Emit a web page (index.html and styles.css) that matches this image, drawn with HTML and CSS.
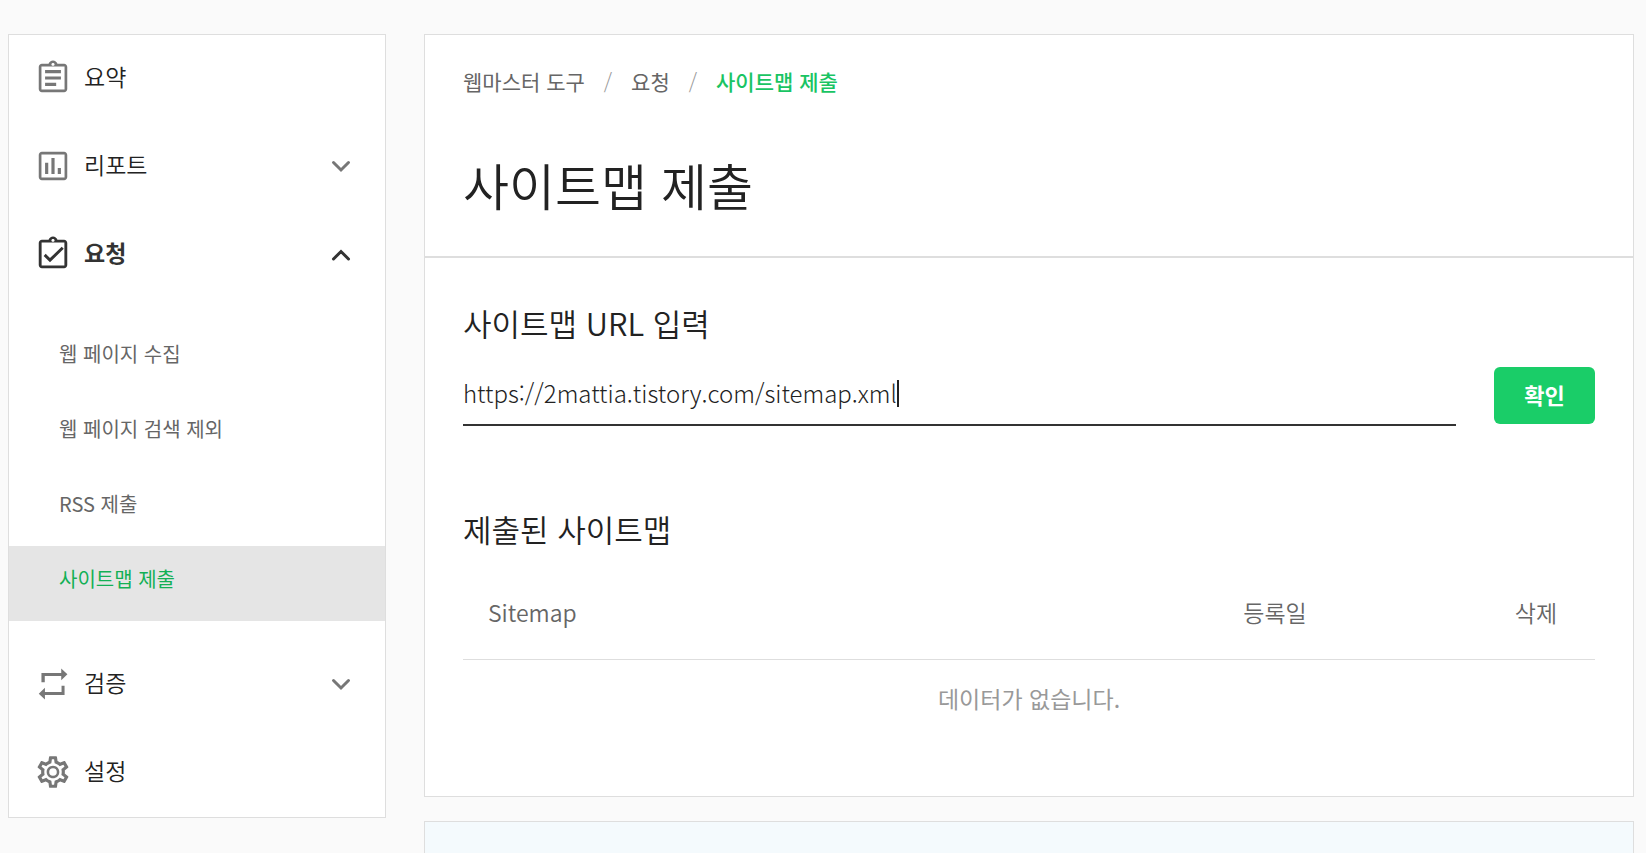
FILE: index.html
```html
<!DOCTYPE html>
<html lang="ko">
<head>
<meta charset="utf-8">
<meta name="viewport" content="width=device-width, initial-scale=1">
<title>사이트맵 제출</title>
<link rel="stylesheet" href="styles.css">
</head>
<body>
<div class="layout">
  <nav class="sidebar">
    <a class="menu-item" href="#">
      <svg class="menu-icon" viewBox="0 0 24 24"><path d="M7 15h7v2H7zm0-4h10v2H7zm0-4h10v2H7zm12-4h-4.180C14.400 1.840 13.300 1 12 1c-1.300 0-2.400.84-2.820 2H5c-1.100 0-2 .9-2 2v14c0 1.100.9 2 2 2h14c1.100 0 2-.9 2-2V5c0-1.100-.9-2-2-2zm-7-.5c.55 0 1 .4 1 .9s-.45.9-1 .9-1-.4-1-.9.450-.9 1-.9zM19.300 19.300H4.700V4.700h14.600z"/></svg>
      <span class="menu-label">요약</span>
    </a>
    <a class="menu-item" href="#">
      <svg class="menu-icon" viewBox="0 0 24 24"><path d="M7 10h2v7H7zm4-3h2v10h-2zm4 6.200h2V17h-2zM19 3H5c-1.100 0-2 .9-2 2v14c0 1.100.9 2 2 2h14c1.100 0 2-.9 2-2V5c0-1.100-.9-2-2-2zm.3 16.300H4.700V4.700h14.600z"/></svg>
      <span class="menu-label">리포트</span>
      <svg class="chevron" viewBox="0 0 24 24"><path d="M4.500 8.500 12 16l7.500-7.500"/></svg>
    </a>
    <a class="menu-item is-open" href="#">
      <svg class="menu-icon" viewBox="0 0 24 24"><path d="M19 3h-4.180C14.400 1.840 13.300 1 12 1c-1.300 0-2.400.84-2.820 2H5c-1.100 0-2 .9-2 2v14c0 1.100.9 2 2 2h14c1.100 0 2-.9 2-2V5c0-1.100-.9-2-2-2zm-7-.5c.55 0 1 .4 1 .9s-.45.9-1 .9-1-.4-1-.9.450-.9 1-.9zM19.200 19.200H4.800V4.800h14.400z"/><path d="m18.800 8.700-1.300-1.300-7.400 7.200-2.700-2.700-1.300 1.300 4 4z"/></svg>
      <span class="menu-label">요청</span>
      <svg class="chevron" viewBox="0 0 24 24"><path d="M4.500 17 12 9.500l7.500 7.500"/></svg>
    </a>
    <div class="submenu">
      <a class="submenu-item" href="#">웹 페이지 수집</a>
      <a class="submenu-item" href="#">웹 페이지 검색 제외</a>
      <a class="submenu-item" href="#">RSS 제출</a>
      <a class="submenu-item is-active" href="#">사이트맵 제출</a>
    </div>
    <a class="menu-item" href="#">
      <svg class="menu-icon" viewBox="0 0 24 24"><path d="M4.700 5.100h12.500V2.200l3.900 3.700-3.900 3.800V6.900H6.800v4H4.700zM19.300 18.900H6.900v2.900L3 18.100l3.900-3.800v2.800h10.500v-4h1.900z"/></svg>
      <span class="menu-label">검증</span>
      <svg class="chevron" viewBox="0 0 24 24"><path d="M4.500 8.500 12 16l7.500-7.500"/></svg>
    </a>
    <a class="menu-item" href="#">
      <svg class="menu-icon" viewBox="0 0 24 24"><path d="M19.430 12.980c.04-.32.070-.64.070-.98 0-.34-.03-.66-.07-.98l2.110-1.650c.19-.15.240-.42.120-.64l-2-3.460c-.09-.16-.26-.25-.44-.25-.06 0-.12.010-.17.030l-2.490 1c-.52-.4-1.080-.73-1.690-.98l-.38-2.650C14.460 2.180 14.250 2 14 2h-4c-.25 0-.46.18-.49.42l-.38 2.650c-.61.25-1.170.59-1.690.98l-2.490-1c-.06-.02-.12-.03-.18-.03-.17 0-.34.09-.43.25l-2 3.460c-.13.22-.07.49.12.640l2.110 1.650c-.04.32-.07.650-.07.980 0 .33.030.66.070.98l-2.110 1.650c-.19.15-.24.420-.12.640l2 3.460c.09.16.26.25.44.25.06 0 .12-.01.17-.03l2.490-1c.52.4 1.080.73 1.690.98l.38 2.650c.03.24.24.42.490.42h4c.25 0 .46-.18.490-.42l.38-2.650c.61-.25 1.170-.59 1.690-.98l2.490 1c.06.020.12.030.18.030.17 0 .34-.09.430-.25l2-3.460c.12-.22.070-.49-.12-.64l-2.110-1.650zm-1.980-1.710c.04.31.050.520.050.730 0 .21-.02.430-.05.730l-.14 1.130.89.700 1.080.84-.7 1.210-1.270-.51-1.040-.42-.9.680c-.43.320-.84.560-1.250.730l-1.060.43-.16 1.130-.2 1.350h-1.400l-.19-1.350-.16-1.130-1.060-.43c-.43-.18-.83-.41-1.230-.71l-.91-.7-1.060.43-1.270.51-.7-1.210 1.080-.84.89-.7-.14-1.130c-.03-.31-.05-.54-.05-.74s.02-.43.050-.73l.14-1.130-.89-.7-1.080-.84.7-1.210 1.270.51 1.040.42.9-.68c.43-.32.840-.56 1.250-.73l1.060-.43.160-1.130.2-1.350h1.390l.19 1.350.16 1.130 1.060.43c.43.180.83.410 1.230.710l.91.700 1.060-.43 1.270-.51.700 1.210-1.070.85-.89.700.14 1.130zM12 8c-2.210 0-4 1.790-4 4s1.790 4 4 4 4-1.790 4-4-1.790-4-4-4zm0 6.400a2.400 2.400 0 1 1 0-4.800 2.400 2.400 0 0 1 0 4.800z"/></svg>
      <span class="menu-label">설정</span>
    </a>
  </nav>

  <main class="content">
    <section class="panel">
      <header class="panel-head">
        <nav class="breadcrumb">
          <a class="crumb" href="#">웹마스터 도구</a>
          <span class="crumb-sep">/</span>
          <a class="crumb" href="#">요청</a>
          <span class="crumb-sep">/</span>
          <a class="crumb is-current" href="#">사이트맵 제출</a>
        </nav>
        <h1 class="page-title">사이트맵 제출</h1>
      </header>
      <div class="panel-body">
        <h2 class="section-title"><label for="sitemap-url">사이트맵 URL 입력</label></h2>
        <form class="url-form">
          <div class="url-field">
            <input class="url-input" id="sitemap-url" type="text" value="https://2mattia.tistory.com/sitemap.xml">
            <span class="caret"></span>
          </div>
          <button class="submit" type="button">확인</button>
        </form>
        <h2 class="section-title">제출된 사이트맵</h2>
        <table class="sitemaps">
          <thead>
            <tr><th class="col-name">Sitemap</th><th class="col-date">등록일</th><th class="col-delete">삭제</th></tr>
          </thead>
          <tbody>
            <tr><td class="empty" colspan="3">데이터가 없습니다.</td></tr>
          </tbody>
        </table>
      </div>
    </section>
    <section class="info"></section>
  </main>
</div>
</body>
</html>
```
FILE: styles.css
```css
* {
  box-sizing: border-box;
}

body {
  margin: 0;
  background: #fafafa;
  color: #222;
  font-family: "Noto Sans CJK KR", sans-serif;
}

a {
  color: inherit;
  text-decoration: none;
}

.layout {
  display: flex;
  align-items: flex-start;
  gap: 38px;
  min-height: 100vh;
  padding: 34px 12px 0 8px;
}

.sidebar {
  display: flex;
  flex-direction: column;
  flex: 0 0 378px;
  gap: 2px;
  padding-bottom: 2px;
  border: 1px solid #dedede;
  background: #fff;
}

.menu-item {
  display: flex;
  align-items: center;
  gap: 12px;
  height: 86px;
  padding: 0 32px 0 25px;
  font-size: 23px;
  font-weight: 350;
  line-height: 30px;
}

.menu-icon {
  width: 38px;
  height: 38px;
  fill: #777;
}

.menu-label {
  flex: 1;
  padding-bottom: 4px;
}

.chevron {
  width: 24px;
  height: 24px;
  fill: none;
  stroke: #777;
  stroke-width: 3;
  stroke-linecap: round;
}

.is-open {
  font-weight: 700;
  color: #333;
}

.is-open .menu-icon {
  fill: #333;
}

.is-open .chevron {
  stroke: #333;
}

.submenu {
  margin: 22px 0 18px;
}

.submenu-item {
  display: block;
  height: 75px;
  padding: 17px 50px;
  color: #666;
  font-size: 20px;
  line-height: 32px;
}

.submenu-item.is-active {
  background: #e5e5e5;
  color: #13b055;
}

.content {
  display: flex;
  flex: 1;
  flex-direction: column;
  align-self: stretch;
  gap: 24px;
  min-width: 0;
}

.panel {
  border: 1px solid #dedede;
  background: #fff;
}

.panel-head {
  padding: 30px 38px;
  border-bottom: 2px solid #dedede;
}

.breadcrumb {
  display: flex;
  gap: 19px;
  font-size: 21px;
  line-height: 32px;
}

.crumb {
  color: #666;
}

.crumb-sep {
  color: #999;
  font-weight: 300;
}

.crumb.is-current {
  color: #19c463;
  font-weight: 500;
}

.page-title {
  margin: 51px 0 6px;
  font-size: 50px;
  font-weight: 350;
  line-height: 72px;
}

.panel-body {
  padding: 41px 38px 61px;
}

.section-title {
  margin: 0;
  font-size: 31px;
  font-weight: 350;
  line-height: 48px;
}

.url-form {
  display: flex;
  align-items: flex-end;
  gap: 38px;
  margin: 19px 0 79px;
}

.url-field {
  display: flex;
  flex: 1;
  align-items: center;
  height: 60px;
  min-width: 0;
  padding-bottom: 4px;
  border-bottom: 2px solid #333;
}

.url-input {
  field-sizing: content;
  padding: 0;
  border: 0;
  outline: 0;
  background: transparent;
  color: #222;
  font-family: "Noto Sans CJK KR", sans-serif;
  font-size: 24px;
  font-weight: 300;
  line-height: 32px;
}

.caret {
  width: 2px;
  height: 27px;
  background: #222;
}

.submit {
  width: 101px;
  height: 57px;
  margin-bottom: 2px;
  padding: 0 0 4px;
  border: 0;
  border-radius: 6px;
  background: #1acd68;
  color: #fff;
  font-family: inherit;
  font-size: 22px;
  font-weight: 700;
}

.sitemaps {
  width: 100%;
  margin-top: 14px;
  border-collapse: collapse;
  table-layout: fixed;
  font-size: 23px;
  line-height: 34px;
}

.sitemaps th {
  height: 92px;
  padding: 0 0 2px;
  border-bottom: 1px solid #dedede;
  color: #666;
  font-weight: 350;
}

.sitemaps .col-name {
  padding-left: 25px;
  text-align: left;
}

.sitemaps .col-date {
  width: 404px;
}

.sitemaps .col-delete {
  width: 118px;
}

.sitemaps .empty {
  height: 76px;
  padding: 2px 0 0;
  color: #999;
  text-align: center;
}

.info {
  flex: 1;
  border: 1px solid #dedede;
  border-bottom: 0;
  background: #f4fafd;
}
```
